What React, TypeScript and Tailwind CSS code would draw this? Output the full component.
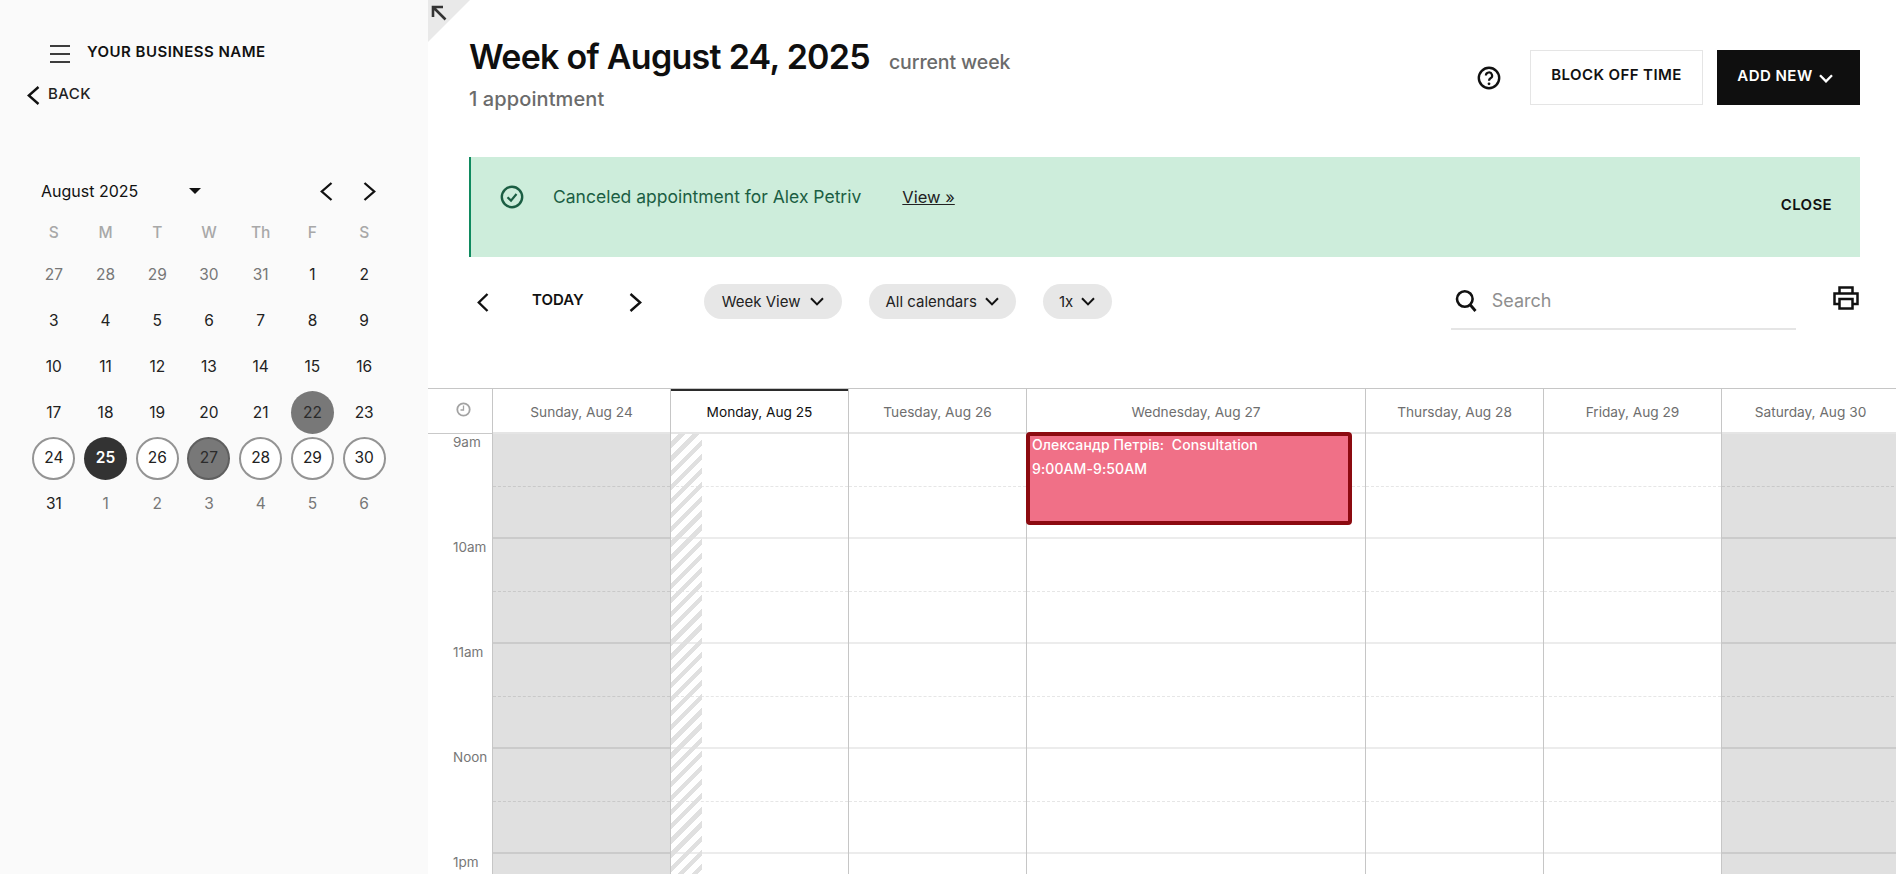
import React from "react";

const Chev = ({ dir, w = 12, h = 18, sw = 2.2, c = "#111" }: { dir: "l" | "r"; w?: number; h?: number; sw?: number; c?: string }) => (
  <svg width={w} height={h} viewBox={`0 0 ${w} ${h}`} fill="none" className="block shrink-0">
    <path
      d={dir === "l" ? `M${w - 1.5} 1 L1.8 ${h / 2} L${w - 1.5} ${h - 1}` : `M1.5 1 L${w - 1.8} ${h / 2} L1.5 ${h - 1}`}
      stroke={c}
      strokeWidth={sw}
    />
  </svg>
);

const Down = ({ c = "#111", sw = 2 }: { c?: string; sw?: number }) => (
  <svg width="14" height="9" viewBox="0 0 14 9" fill="none" className="block shrink-0">
    <path d="M1 1.2 L7 7.4 L13 1.2" stroke={c} strokeWidth={sw} />
  </svg>
);

const labels = ["S", "M", "T", "W", "Th", "F", "S"];
type D = { t: string; k?: string };
const rows: D[][] = [
  [
    { t: "27", k: "o" },
    { t: "28", k: "o" },
    { t: "29", k: "o" },
    { t: "30", k: "o" },
    { t: "31", k: "o" },
    { t: "1" },
    { t: "2" },
  ],
  ["3", "4", "5", "6", "7", "8", "9"].map((t) => ({ t })),
  ["10", "11", "12", "13", "14", "15", "16"].map((t) => ({ t })),
  [{ t: "17" }, { t: "18" }, { t: "19" }, { t: "20" }, { t: "21" }, { t: "22", k: "g" }, { t: "23" }],
  [
    { t: "24", k: "w" },
    { t: "25", k: "d" },
    { t: "26", k: "w" },
    { t: "27", k: "wg" },
    { t: "28", k: "w" },
    { t: "29", k: "w" },
    { t: "30", k: "w" },
  ],
  [
    { t: "31" },
    { t: "1", k: "o" },
    { t: "2", k: "o" },
    { t: "3", k: "o" },
    { t: "4", k: "o" },
    { t: "5", k: "o" },
    { t: "6", k: "o" },
  ],
];

const dayClass = (k?: string) => {
  switch (k) {
    case "o":
      return "text-[#777777]";
    case "g":
      return "bg-[#787878] text-[#2b2b2b] rounded-full";
    case "w":
      return "bg-white border-2 border-[#949494] text-[#222222] rounded-full";
    case "wg":
      return "bg-[#787878] border-2 border-[#5f5f5f] text-[#2b2b2b] rounded-full";
    case "d":
      return "bg-[#333333] text-white font-semibold rounded-full";
    default:
      return "text-[#222222]";
  }
};

const Sidebar = () => (
  <aside className="w-[428px] shrink-0 bg-[#fafafa] h-full">
    <div className="flex items-center pl-[50px] pt-[43px] h-[63px]">
      <div className="w-[20px] flex flex-col gap-[6px] mt-[1px]">
        <div className="h-[2px] bg-[#3d3d3d]" />
        <div className="h-[2px] bg-[#3d3d3d]" />
        <div className="h-[2px] bg-[#3d3d3d]" />
      </div>
      <span className="ml-[17px] -mt-[3px] text-[15px] leading-[20px] font-semibold tracking-[0.47px] text-[#111111]">YOUR BUSINESS NAME</span>
    </div>
    <div className="flex items-center pl-[27px] mt-[22px] h-[20px]">
      <Chev dir="l" w={13} h={19} sw={2.4} />
      <span className="ml-[8px] -mt-[2px] text-[15px] leading-[18px] font-medium tracking-[0.4px] text-[#222222]">BACK</span>
    </div>
    <div className="flex items-center pl-[41px] mt-[74px] h-[24px]">
      <span className="w-[148px] text-[16px] leading-[24px] text-[#111111]">August 2025</span>
      <svg width="12" height="6" viewBox="0 0 12 6" className="block">
        <path d="M0 0 H12 L6 6 Z" fill="#111" />
      </svg>
      <div className="ml-[119px]">
        <Chev dir="l" w={13} h={19} sw={2.3} />
      </div>
      <div className="ml-[30px]">
        <Chev dir="r" w={13} h={19} sw={2.3} />
      </div>
    </div>
    <div className="pl-[28px] w-[390px] mt-[18px]">
      <div className="grid grid-cols-7 h-[24px] items-center">
        {labels.map((l, i) => (
          <div key={i} className="text-center text-[15.5px] leading-[24px] font-medium text-[#a8a8a8]">
            {l}
          </div>
        ))}
      </div>
      <div className="mt-[7px] flex flex-col">
        {rows.map((r, i) => (
          <div key={i} className={`grid grid-cols-7 ${i === 3 ? "h-[45px]" : "h-[46px]"} items-center justify-items-center`}>
            {r.map((d, j) => (
              <div key={j} className={`w-[43px] h-[43px] flex items-center justify-center text-[15.5px] ${dayClass(d.k)}`}>
                {d.t}
              </div>
            ))}
          </div>
        ))}
      </div>
    </div>
  </aside>
);

const Pill = ({ label, w, chevGap }: { label: string; w: string; chevGap: string }) => (
  <div className={`${w} h-[35px] rounded-full bg-[#e7e7e7] flex items-center justify-center text-[15px] text-[#222222] ${chevGap}`}>
    <span className="pt-[1px]">{label}</span>
    <Down />
  </div>
);

const Header = () => (
  <div className="flex justify-between items-start pl-[41px] pr-[36px] pt-[34px] h-[157px]">
    <div>
      <div className="flex items-baseline">
        <h1 className="text-[34px] leading-[46px] font-semibold tracking-[-0.72px] text-[#0f0f0f]">Week of August 24, 2025</h1>
        <span className="ml-[19px] text-[19.5px] font-medium tracking-[-0.1px] text-[#6b6b6b]">current week</span>
      </div>
      <div className="mt-[6px] text-[20px] leading-[26px] font-medium tracking-[0.1px] text-[#6b6b6b]">1 appointment</div>
    </div>
    <div className="flex items-center mt-[16px]">
      <svg width="24" height="24" viewBox="0 0 24 24" fill="none" className="block mr-[29px]">
        <circle cx="12" cy="12" r="10.2" stroke="#111" strokeWidth="2.4" />
        <path d="M8.9 9.6 a3.1 3.1 0 1 1 4.6 2.7 c-1 .6 -1.5 1.1 -1.5 2.4" stroke="#111" strokeWidth="2.2" />
        <circle cx="12" cy="17.8" r="1.4" fill="#111" />
      </svg>
      <div className="w-[173px] h-[55px] border border-[#e5e5e5] bg-white flex items-center justify-center pb-[4px] text-[15px] font-semibold tracking-[0.4px] text-[#111111]">
        BLOCK OFF TIME
      </div>
      <div className="ml-[14px] w-[143px] h-[55px] bg-[#0f0f0f] flex items-center justify-center gap-[6px] pb-[3px] pr-[7px] text-[15px] font-semibold tracking-[0.45px] text-white">
        <span>ADD NEW</span>
        <span className="pt-[5px]">
          <Down c="#fff" sw={2.3} />
        </span>
      </div>
    </div>
  </div>
);

const Banner = () => (
  <div className="ml-[41px] mr-[36px] h-[100px] bg-[#cdeddb] border-l-2 border-[#0f8a5f] flex items-start">
    <svg width="24" height="24" viewBox="0 0 24 24" fill="none" className="block ml-[29px] mt-[28px]">
      <circle cx="12" cy="12" r="10.2" stroke="#1b5e43" strokeWidth="2.4" />
      <path d="M7.5 12.2 L11 15.6 L16.5 9" stroke="#1b5e43" strokeWidth="2.2" />
    </svg>
    <span className="ml-[29px] mt-[28px] text-[17.5px] leading-[24px] text-[#1b5e43]">Canceled appointment for Alex Petriv</span>
    <span className="ml-[41px] mt-[28px] text-[16.5px] leading-[24px] text-[#222222] underline">View »</span>
    <span className="ml-auto mr-[28px] mt-[37px] text-[15px] leading-[21px] font-semibold tracking-[0.35px] text-[#111111]">CLOSE</span>
  </div>
);

const Toolbar = () => (
  <div className="flex items-start h-[131px] pl-[49px]">
    <div className="mt-[36px]">
      <Chev dir="l" w={12} h={19} sw={2.4} />
    </div>
    <span className="ml-[43px] mt-[32px] text-[15px] leading-[22px] font-semibold text-[#111111]">TODAY</span>
    <div className="ml-[45px] mt-[36px]">
      <Chev dir="r" w={13} h={19} sw={2.4} />
    </div>
    <div className="ml-[62px] mt-[27px] flex gap-[27px]">
      <Pill label="Week View" w="w-[138px]" chevGap="gap-[9px]" />
      <Pill label="All calendars" w="w-[147px]" chevGap="gap-[8px]" />
      <Pill label="1x" w="w-[69px]" chevGap="gap-[8px]" />
    </div>
    <div className="ml-[339px] mt-[28px] w-[345px] h-[45px] border-b-2 border-[#e5e5e5] flex items-start">
      <svg width="22" height="24" viewBox="0 0 22 24" fill="none" className="block ml-[4px] mt-[4px]">
        <circle cx="9.8" cy="10" r="7.8" stroke="#111" strokeWidth="2.6" />
        <path d="M15.4 16 L20.5 22" stroke="#111" strokeWidth="2.8" />
      </svg>
      <span className="ml-[15px] mt-[2px] text-[18px] leading-[27px] text-[#8f8f8f]">Search</span>
    </div>
    <svg width="26" height="24" viewBox="0 0 26 24" fill="none" className="block ml-[37px] mt-[29px]">
      <path d="M6.5 7 V1.5 H19.5 V7" stroke="#111" strokeWidth="2.5" />
      <path d="M6 18 H1.5 V7.5 H24.5 V18 H20" stroke="#111" strokeWidth="2.5" />
      <rect x="6.5" y="13" width="13" height="9.5" stroke="#111" strokeWidth="2.5" />
    </svg>
  </div>
);

const Hours = ({ gray }: { gray?: boolean }) => (
  <>
    {[0, 1, 2, 3, 4].map((i) => (
      <div key={i}>
        <div className={`h-[53px] border-b border-dashed ${gray ? "border-[#c9c9c9]" : "border-[#e6e6e6]"}`} />
        <div className={`h-[52px] border-b-2 ${gray ? "border-[#cbcbcb]" : "border-[#ececec]"}`} />
      </div>
    ))}
  </>
);

const days = [
  { l: "Sunday, Aug 24", w: "w-[178px]", gray: true },
  { l: "Monday, Aug 25", w: "w-[178px]", today: true },
  { l: "Tuesday, Aug 26", w: "w-[178px]" },
  { l: "Wednesday, Aug 27", w: "w-[339px]", event: true },
  { l: "Thursday, Aug 28", w: "w-[178px]" },
  { l: "Friday, Aug 29", w: "w-[178px]" },
  { l: "Saturday, Aug 30", w: "w-[178px]", gray: true },
];

const times = ["9am", "10am", "11am", "Noon", "1pm"];

const Calendar = () => (
  <div className="flex border-t border-[#c6c6c6] overflow-hidden w-[1468px]">
    <div className="w-[64px] shrink-0">
      <div className="h-[45px] border-b border-[#c9c9c9] flex items-center pl-[28px]">
        <svg width="15" height="15" viewBox="0 0 15 15" fill="none" className="block -mt-[3px]">
          <circle cx="7.5" cy="7.5" r="6.2" stroke="#a3a3a3" strokeWidth="1.8" />
          <path d="M7.5 3.5 V8 H4.5" stroke="#a3a3a3" strokeWidth="1.3" />
        </svg>
      </div>
      {times.map((t) => (
        <div key={t} className="h-[105px] pl-[25px] text-[13.5px] leading-[16px] text-[#777777]">
          {t}
        </div>
      ))}
    </div>
    {days.map((d) => (
      <div key={d.l} className={`${d.w} shrink-0 border-l border-[#c6c6c6]`}>
        <div
          className={`flex items-center justify-center text-[13.7px] border-b-2 border-[#e5e5e5] bg-white ${
            d.today ? "text-[#111111] border-t-[3px] border-t-[#2b2b2b] -mt-px h-[46px] pt-[1px]" : "text-[#6e6e6e] h-[45px] pt-[3px]"
          }`}
        >
          {d.l}
        </div>
        <div className={`relative ${d.gray ? "bg-[#e0e0e0]" : "bg-white"}`}>
          <Hours gray={d.gray} />
          {d.today && (
            <div className="absolute left-0 top-0 bottom-0 w-[31px] bg-[repeating-linear-gradient(135deg,transparent_0px,transparent_5.5px,#e0e0e0_5.5px,#e0e0e0_10px)]" />
          )}
          {d.event && (
            <div className="absolute left-[-1px] top-[-2px] w-[326px] h-[93px] rounded-[4px] border-[4px] border-[#8c0a10] bg-[#f07087] px-[2px] text-[14px] leading-[24px] font-medium tracking-[0.1px] text-white z-10">
              <div className="-mt-[3px]">Олександр Петрів:&nbsp; Consultation</div>
              <div>9:00AM-9:50AM</div>
            </div>
          )}
        </div>
      </div>
    ))}
  </div>
);

export default function App() {
  return (
    <div className="flex h-[874px] w-[1896px] overflow-hidden bg-white font-['Inter','Liberation_Sans',sans-serif]">
      <Sidebar />
      <main className="relative flex-1 min-w-0">
        <div className="absolute left-0 top-0 w-[42px] h-[42px] bg-[#e9e9e9] [clip-path:polygon(0_0,100%_0,0_100%)]" />
        <svg width="16" height="16" viewBox="0 0 16 16" fill="none" className="absolute left-[3px] top-[5px]">
          <path d="M2 12 V2 H12 M2 2 L14.5 14.5" stroke="#333" strokeWidth="2.6" />
        </svg>
        <Header />
        <Banner />
        <Toolbar />
        <Calendar />
      </main>
    </div>
  );
}
